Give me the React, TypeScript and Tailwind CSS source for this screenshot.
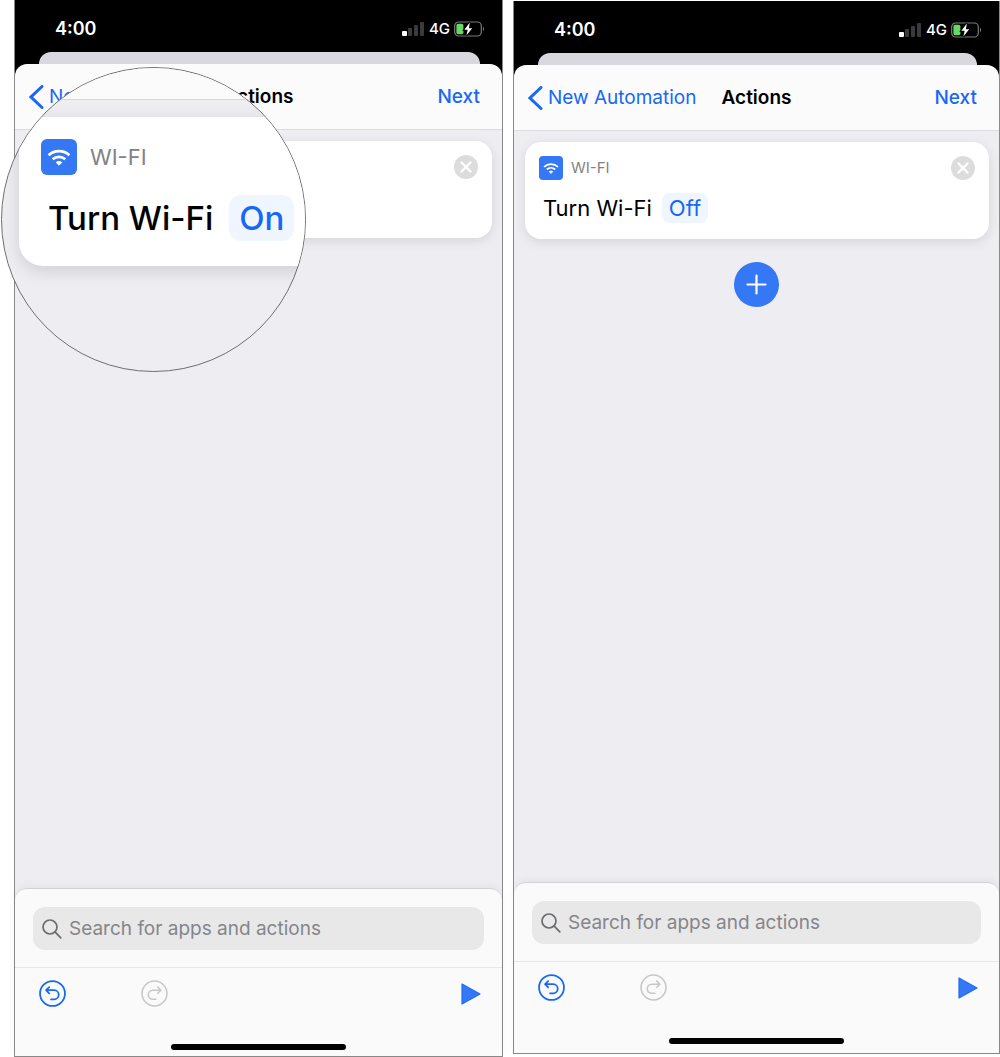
import clsx from "clsx"

function SignalIcon() {
  return (
    <svg width="23" height="14" viewBox="0 0 23 14" aria-hidden="true">
      <rect x="0" y="9" width="5" height="5" rx="1" fill="#fff" />
      <rect x="6" y="6" width="4" height="8" rx="1" fill="#3a3a3c" />
      <rect x="12" y="3" width="4" height="11" rx="1" fill="#3a3a3c" />
      <rect x="18" y="0" width="4" height="14" rx="1" fill="#3a3a3c" />
    </svg>
  )
}

function BatteryIcon() {
  return (
    <svg width="31" height="16" viewBox="0 0 31 16" aria-hidden="true">
      <rect x="0.7" y="1" width="26.6" height="14" rx="4" fill="none" stroke="#7c7c80" strokeWidth="1.2" />
      <rect x="2.4" y="2.8" width="7" height="10.4" rx="1.6" fill="#65d964" />
      <path d="M29 5.8c1.4.6 1.4 3.8 0 4.4z" fill="#7c7c80" />
      <path d="M15.8 1.6 10.4 8.8h3.3l-1.3 5.6L18.2 7.2h-3.3z" fill="#fff" stroke="#000" strokeWidth="2.2" paintOrder="stroke" />
    </svg>
  )
}

function WifiIcon({ className }: { className?: string }) {
  return (
    <svg viewBox="0 0 36 36" className={className} aria-hidden="true">
      <g fill="none" stroke="#fff" strokeWidth="2.7">
        <path d="M7.6 16.2a15.2 15.2 0 0 1 20.8 0" />
        <path d="M11.7 20.3a9.4 9.4 0 0 1 12.6 0" />
      </g>
      <path d="M15.2 23.4a4.6 4.6 0 0 1 5.6 0L18 26.2z" fill="#fff" stroke="#fff" strokeLinejoin="round" />
    </svg>
  )
}

function StatusBar() {
  return (
    <div className="flex h-[52px] items-center justify-between pt-[6px] pr-[17px] pl-10 text-white">
      <span className="text-lg leading-6 font-semibold">4:00</span>
      <div className="flex items-center gap-1">
        <SignalIcon />
        <span className="text-[15px] leading-5 font-medium">4G</span>
        <BatteryIcon />
      </div>
    </div>
  )
}

function NavBar() {
  return (
    <header className="grid h-[66px] grid-cols-[1fr_auto_1fr] items-center rounded-t-xl border-b border-[#dcdce0] bg-[#fbfbfb] px-[14px] text-[19px] leading-6">
      <button type="button" className="flex items-center gap-[5px] whitespace-nowrap text-[#1768f5]">
        <svg width="15" height="24" viewBox="0 0 15 24" fill="none" stroke="currentColor" strokeWidth="3" strokeLinecap="round" aria-hidden="true">
          <path d="M13 1.5 2 12l11 10.5" />
        </svg>
        New Automation
      </button>
      <h1 className="font-semibold text-black">Actions</h1>
      <button type="button" className="mr-2 justify-self-end font-medium text-[#1768f5]">
        Next
      </button>
    </header>
  )
}

function ActionCard({ value, covered }: { value: string; covered?: boolean }) {
  return (
    <section className="mr-[10px] ml-[11px] mt-[11px] h-[97px] rounded-2xl bg-white px-[14px] pt-[14px] shadow-[0_3px_12px_rgba(0,0,0,0.1)]">
      <div className="flex items-center gap-2">
        {!covered && (
          <>
            <span className="size-6 rounded bg-[#3478f6]">
              <WifiIcon className="size-6" />
            </span>
            <span className="text-[15px] leading-6 text-[#828286]">WI-FI</span>
          </>
        )}
        <button type="button" aria-label="Remove action" className="ml-auto size-6 rounded-full bg-[#dcdcdd]">
          <svg viewBox="0 0 24 24" className="size-6" stroke="#fff" strokeWidth="2.4" strokeLinecap="round" aria-hidden="true">
            <path d="m7.5 7.5 9 9m0-9-9 9" />
          </svg>
        </button>
      </div>
      {!covered && (
        <div className="mt-3 flex items-center gap-[10px] pl-1 text-[22px] leading-8">
          <span className="text-black">Turn Wi-Fi</span>
          <button type="button" className="h-[30px] rounded-lg bg-[#f0f6ff] px-[7px] leading-[30px] text-[#1768f5]">
            {value}
          </button>
        </div>
      )}
    </section>
  )
}

// Round loupe over the top left corner of the screen
function Magnifier({ value }: { value: string }) {
  return (
    <div className="absolute top-[67px] -left-[14px] size-[305px] overflow-hidden rounded-full border border-[#707070] bg-[#ededf2]">
      <div className="h-8 border-b border-[#d8d8dc] bg-[#fbfbfb]" />
      <div className="mt-[17px] ml-[17px] h-[149px] w-[400px] rounded-3xl bg-white pt-[22px] pl-[22px] shadow-[0_5px_18px_rgba(0,0,0,0.13)]">
        <div className="flex items-center gap-[13px]">
          <span className="size-9 rounded-md bg-[#3478f6]">
            <WifiIcon className="size-9" />
          </span>
          <span className="text-[22px] leading-9 text-[#828286]">WI-FI</span>
        </div>
        <div className="mt-5 flex items-center gap-4 pl-[7px] text-[33px] leading-[46px] font-medium">
          <span className="text-black">Turn Wi-Fi</span>
          <span className="rounded-xl bg-[#f0f6ff] px-[10px] text-[#1768f5]">{value}</span>
        </div>
      </div>
    </div>
  )
}

function BottomPanel({ className }: { className?: string }) {
  return (
    <footer className={clsx("rounded-t-xl border-t border-[#d2d2d6] bg-[#fafafa] pt-[18px] shadow-[0_-2px_8px_rgba(0,0,0,0.05)]", className)}>
      <label className="mx-[18px] flex h-[43px] items-center gap-[7px] rounded-xl bg-[#e8e8e9] pl-[9px]">
        <svg width="20" height="20" viewBox="0 0 20 20" fill="none" stroke="#6c6c70" strokeWidth="1.7" strokeLinecap="round" aria-hidden="true">
          <circle cx="8" cy="8" r="7" />
          <path d="m13.2 13.2 5.6 5.6" />
        </svg>
        <input
          type="text"
          aria-label="Search for apps and actions"
          placeholder="Search for apps and actions"
          className="min-w-0 flex-1 bg-transparent text-[19px] leading-6 outline-none placeholder:text-[#858589]"
        />
      </label>
      <div className="mt-[17px] flex h-[52px] items-center border-t border-[#e6e6e8] pr-[21px] pl-6">
        <button type="button" aria-label="Undo" className="text-[#1768f5]">
          <svg width="27" height="27" viewBox="0 0 26 26" fill="none" stroke="currentColor" strokeWidth="1.7" strokeLinecap="round" strokeLinejoin="round" aria-hidden="true">
            <circle cx="13" cy="13" r="12" />
            <path d="M9.8 6.8 6.8 9.8l3 3M7 9.8h7.6a4.4 4.4 0 0 1 0 8.8h-3" />
          </svg>
        </button>
        <button type="button" aria-label="Redo" disabled className="ml-[75px] text-[#c7c7c9]">
          <svg width="27" height="27" viewBox="0 0 26 26" fill="none" stroke="currentColor" strokeWidth="1.5" strokeLinecap="round" strokeLinejoin="round" aria-hidden="true">
            <circle cx="13" cy="13" r="12" />
            <path d="m16.2 6.8 3 3-3 3M19 9.8h-7.6a4.4 4.4 0 0 0 0 8.8h3" />
          </svg>
        </button>
        <button type="button" aria-label="Run" className="ml-auto">
          <svg width="20" height="22" viewBox="0 0 20 22" fill="#3478f6" stroke="#1f6bf6" strokeWidth="1.2" strokeLinejoin="round" aria-hidden="true">
            <path d="M1 1v20l18-10z" />
          </svg>
        </button>
      </div>
      <div className="mx-auto mt-[25px] h-[6px] w-[175px] rounded-full bg-black" />
    </footer>
  )
}

interface PhoneProps {
  value: string
  magnified?: boolean
  className?: string
  footerClassName?: string
}

function Phone({ value, magnified, className, footerClassName }: PhoneProps) {
  return (
    <article className={clsx("relative flex min-w-0 flex-col border-x border-b border-[#8a8a8a] bg-[#ededf2]", className)}>
      <div className="bg-black">
        <StatusBar />
        <div className="mr-[22px] ml-6 h-3 rounded-t-xl bg-[#d9d8de]" />
        <NavBar />
      </div>
      <main className="flex-1">
        <ActionCard value={value} covered={magnified} />
        {!magnified && (
          <button type="button" aria-label="Add action" className="mx-auto mt-[23px] block size-[45px] rounded-full bg-[#3478f6]">
            <svg viewBox="0 0 45 45" className="size-[45px]" stroke="#fff" strokeWidth="2.2" strokeLinecap="round" aria-hidden="true">
              <path d="M22.5 13.5v18m-9-9h18" />
            </svg>
          </button>
        )}
      </main>
      <BottomPanel className={footerClassName} />
      {magnified && <Magnifier value={value} />}
    </article>
  )
}

export default function App() {
  return (
    <div className="grid min-h-screen grid-cols-[489fr_487fr] gap-[10px] bg-white pl-[14px] font-['Inter',sans-serif]">
      <Phone value="On" magnified footerClassName="pb-[6px]" />
      <Phone value="Off" className="mt-px mb-[3px]" footerClassName="pb-[9px]" />
    </div>
  )
}
